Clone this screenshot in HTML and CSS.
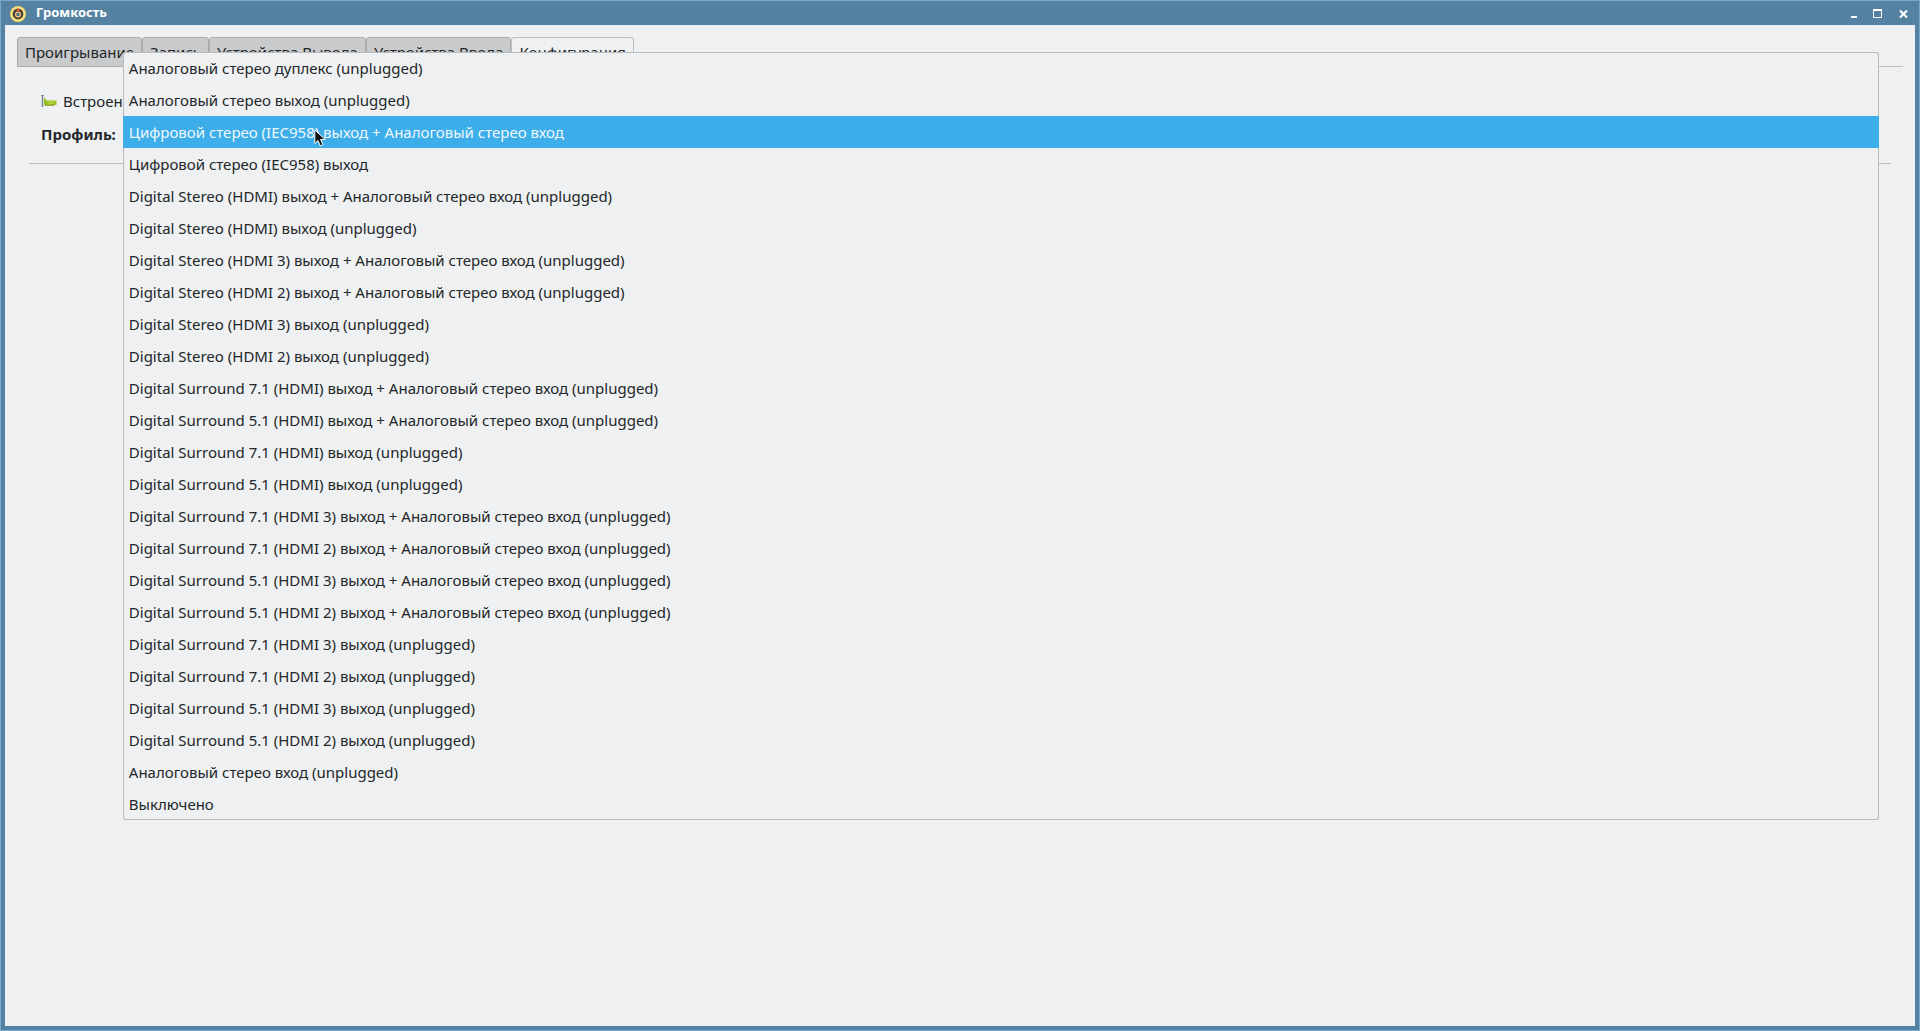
FILE: index.html
```html
<!DOCTYPE html>
<html lang="ru">
<head>
<meta charset="utf-8">
<title>Громкость</title>
<link rel="stylesheet" href="styles.css">
</head>
<body>
<div class="window">
  <header class="titlebar">
    <svg class="app-icon" viewBox="0 0 16 16" aria-hidden="true">
      <circle cx="8" cy="8" r="8" fill="#f0d465"/>
      <circle cx="8" cy="8" r="7" fill="#f8e684"/>
      <circle cx="8" cy="8" r="5.400" fill="#4a4038"/>
      <circle cx="8" cy="8.500" r="3" fill="#f5cf7a"/>
      <circle cx="8" cy="8.500" r="1.800" fill="#4f6788"/>
      <path d="M8 2 9.800 5.200H6.200z" fill="#e2562c"/>
    </svg>
    <h1 class="title">Громкость</h1>
    <div class="controls">
      <button class="control" aria-label="Свернуть"><svg viewBox="0 0 10 10"><path d="M5 7h6v2H5z" fill="#fff"/></svg></button>
      <button class="control" aria-label="Развернуть"><svg viewBox="0 0 10 10"><path d="M1.500 0v8.500h8V0" fill="none" stroke="#fff"/><path d="M1 0h9v2H1z" fill="#fff"/></svg></button>
      <button class="control" aria-label="Закрыть"><svg viewBox="0 0 10 10"><path d="m2 1.500 7 7m0-7-7 7" fill="none" stroke="#fff" stroke-width="2"/></svg></button>
    </div>
  </header>
  <main class="content">
    <div class="tabs" role="tablist">
      <button class="tab" role="tab">Проигрывание</button>
      <button class="tab" role="tab">Запись</button>
      <button class="tab" role="tab">Устройства Вывода</button>
      <button class="tab" role="tab">Устройства Ввода</button>
      <button class="tab active" role="tab" aria-selected="true">Конфигурация</button>
    </div>
    <section class="pane" role="tabpanel">
      <div class="device">
        <svg class="card-icon" viewBox="0 0 16 16" aria-hidden="true">
          <path d="M0 2.500h3" stroke="#8b93a0"/>
          <path d="M1.500 2v12" stroke="#7d8794" stroke-width="1.500"/>
          <path d="M3 4.500 6 7.500h9.500V12H3z" fill="#94c11f"/>
          <path d="M6 7.500h9.500v1H6z" fill="#c5de62"/>
          <path d="M7 9.500h6v1.500H7z" fill="#b9d33c"/>
          <path d="M4 12h9v1H4z" fill="#a79c4c"/>
        </svg>
        <span>Встроенное аудио</span>
      </div>
      <div class="profile">
        <label class="label" for="profile">Профиль:</label>
        <div class="combo">
          <select id="profile" class="select">
            <option>Цифровой стерео (IEC958) выход + Аналоговый стерео вход</option>
          </select>
          <ul class="popup" role="listbox" aria-label="Профиль">
            <li class="item" role="option">Аналоговый стерео дуплекс (unplugged)</li>
            <li class="item" role="option">Аналоговый стерео выход (unplugged)</li>
            <li class="item current" role="option" aria-selected="true">Цифровой стерео (IEC958) выход + Аналоговый стерео вход
              <svg class="pointer" viewBox="0 0 12 18" aria-hidden="true"><path d="M.8 1v13.500l3.200-3 2.200 5.300 2.700-1.100-2.300-5.200h4.600z" fill="#111" stroke="#fff"/></svg></li>
            <li class="item" role="option">Цифровой стерео (IEC958) выход</li>
            <li class="item" role="option">Digital Stereo (HDMI) выход + Аналоговый стерео вход (unplugged)</li>
            <li class="item" role="option">Digital Stereo (HDMI) выход (unplugged)</li>
            <li class="item" role="option">Digital Stereo (HDMI 3) выход + Аналоговый стерео вход (unplugged)</li>
            <li class="item" role="option">Digital Stereo (HDMI 2) выход + Аналоговый стерео вход (unplugged)</li>
            <li class="item" role="option">Digital Stereo (HDMI 3) выход (unplugged)</li>
            <li class="item" role="option">Digital Stereo (HDMI 2) выход (unplugged)</li>
            <li class="item" role="option">Digital Surround 7.1 (HDMI) выход + Аналоговый стерео вход (unplugged)</li>
            <li class="item" role="option">Digital Surround 5.1 (HDMI) выход + Аналоговый стерео вход (unplugged)</li>
            <li class="item" role="option">Digital Surround 7.1 (HDMI) выход (unplugged)</li>
            <li class="item" role="option">Digital Surround 5.1 (HDMI) выход (unplugged)</li>
            <li class="item" role="option">Digital Surround 7.1 (HDMI 3) выход + Аналоговый стерео вход (unplugged)</li>
            <li class="item" role="option">Digital Surround 7.1 (HDMI 2) выход + Аналоговый стерео вход (unplugged)</li>
            <li class="item" role="option">Digital Surround 5.1 (HDMI 3) выход + Аналоговый стерео вход (unplugged)</li>
            <li class="item" role="option">Digital Surround 5.1 (HDMI 2) выход + Аналоговый стерео вход (unplugged)</li>
            <li class="item" role="option">Digital Surround 7.1 (HDMI 3) выход (unplugged)</li>
            <li class="item" role="option">Digital Surround 7.1 (HDMI 2) выход (unplugged)</li>
            <li class="item" role="option">Digital Surround 5.1 (HDMI 3) выход (unplugged)</li>
            <li class="item" role="option">Digital Surround 5.1 (HDMI 2) выход (unplugged)</li>
            <li class="item" role="option">Аналоговый стерео вход (unplugged)</li>
            <li class="item" role="option">Выключено</li>
          </ul>
        </div>
      </div>
      <hr class="separator">
    </section>
  </main>
</div>
</body>
</html>
```

FILE: styles.css
```css
* {
  box-sizing: border-box;
}

body {
  margin: 0;
  font: 15px/22px "Noto Sans", sans-serif;
  color: #232729;
}

button,
select {
  font: inherit;
  color: inherit;
}

/* Window frame */
.window {
  display: flex;
  flex-direction: column;
  min-height: 100vh;
  border: 1px solid #7ba7cb;
  background: #5581a3;
}

.titlebar {
  display: flex;
  align-items: center;
  height: 24px;
  padding: 0 6px 0 9px;
}

.app-icon {
  width: 16px;
  height: 16px;
  margin-top: 2px;
}

.title {
  flex: 1;
  margin: 0 0 2px 10px;
  font-size: 13px;
  line-height: 20px;
  font-weight: 700;
  color: #fff;
}

.controls {
  display: flex;
  gap: 6px;
}

.control {
  display: flex;
  align-items: center;
  justify-content: center;
  width: 20px;
  height: 22px;
  padding: 2px 0 0;
  border: 0;
  background: none;
}

.control svg {
  width: 10px;
  height: 10px;
  overflow: visible;
}

.content {
  flex: 1;
  margin: 0 4px 4px;
  padding: 12px;
  background: #eef0f1;
}

/* Tabs */
.tabs {
  display: flex;
}

.tab {
  height: 30px;
  padding: 0 7px;
  border: 1px solid #a9abad;
  border-radius: 3px 3px 0 0;
  background: #c9cacb;
}

.tab.active {
  border-color: #bcbfc1;
  border-bottom-color: transparent;
  background: #eff0f1;
}

.pane {
  margin-top: -1px;
  padding: 23px 12px;
  border-top: 1px solid #bcbec0;
}

/* Sound card row */
.device {
  display: flex;
  align-items: center;
  gap: 6px;
  padding-left: 12px;
}

.card-icon {
  width: 16px;
  height: 16px;
}

.profile {
  display: flex;
  align-items: center;
  gap: 7px;
  padding: 6px 12px 0;
}

.label {
  font-weight: 700;
}

.combo {
  position: relative;
  flex: 1;
}

.select {
  display: block;
  width: 100%;
  height: 32px;
}

.popup {
  position: absolute;
  top: -66px;
  left: 0;
  right: 0;
  margin: 0;
  padding: 0;
  list-style: none;
  border-radius: 3px;
  background: #eef0f1;
  box-shadow: inset 0 0 0 1px #b9bcbe;
}

.item {
  position: relative;
  height: 32px;
  padding: 0 6px;
  line-height: 32px;
  white-space: nowrap;
}

.item.current {
  background: #3daee9;
  color: #eff8fd;
}

.pointer {
  position: absolute;
  top: 13px;
  left: 191px;
  width: 12px;
  height: 18px;
}

.separator {
  margin: 13px 0 0;
  border: 0;
  border-top: 1px solid #bcbec0;
}
```
